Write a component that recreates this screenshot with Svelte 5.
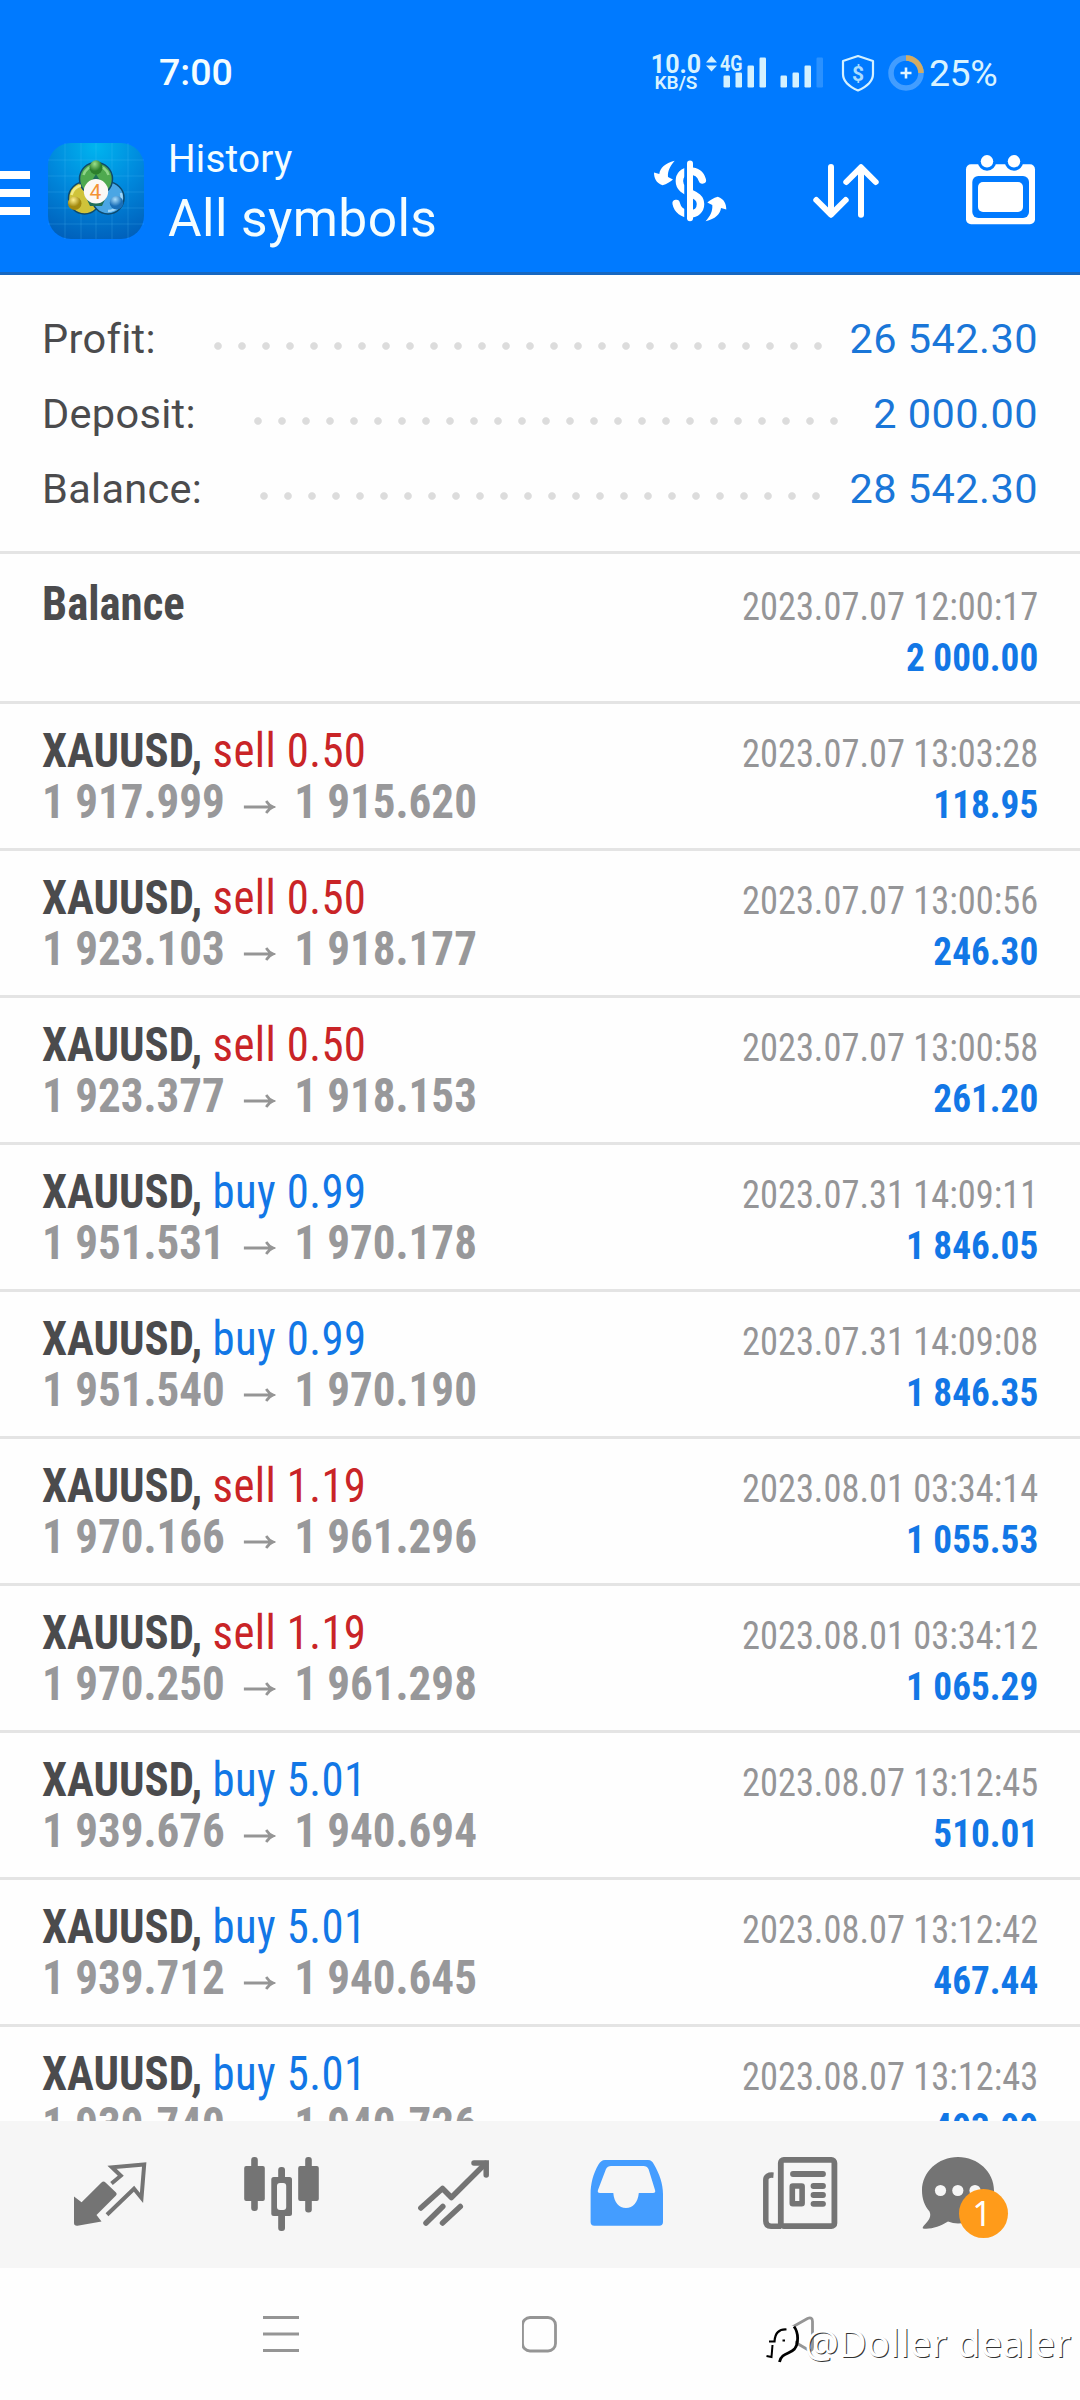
<script lang="ts">
  type Deal = {
    symbol: string;
    side?: "buy" | "sell";
    volume?: string;
    open?: string;
    close?: string;
    time: string;
    profit: string;
  };

  const summary = [
    { label: "Profit:", value: "26 542.30" },
    { label: "Deposit:", value: "2 000.00" },
    { label: "Balance:", value: "28 542.30" },
  ];

  const deals: Deal[] = [
    { symbol: "Balance", time: "2023.07.07 12:00:17", profit: "2 000.00" },
    { symbol: "XAUUSD", side: "sell", volume: "0.50", open: "1 917.999", close: "1 915.620", time: "2023.07.07 13:03:28", profit: "118.95" },
    { symbol: "XAUUSD", side: "sell", volume: "0.50", open: "1 923.103", close: "1 918.177", time: "2023.07.07 13:00:56", profit: "246.30" },
    { symbol: "XAUUSD", side: "sell", volume: "0.50", open: "1 923.377", close: "1 918.153", time: "2023.07.07 13:00:58", profit: "261.20" },
    { symbol: "XAUUSD", side: "buy", volume: "0.99", open: "1 951.531", close: "1 970.178", time: "2023.07.31 14:09:11", profit: "1 846.05" },
    { symbol: "XAUUSD", side: "buy", volume: "0.99", open: "1 951.540", close: "1 970.190", time: "2023.07.31 14:09:08", profit: "1 846.35" },
    { symbol: "XAUUSD", side: "sell", volume: "1.19", open: "1 970.166", close: "1 961.296", time: "2023.08.01 03:34:14", profit: "1 055.53" },
    { symbol: "XAUUSD", side: "sell", volume: "1.19", open: "1 970.250", close: "1 961.298", time: "2023.08.01 03:34:12", profit: "1 065.29" },
    { symbol: "XAUUSD", side: "buy", volume: "5.01", open: "1 939.676", close: "1 940.694", time: "2023.08.07 13:12:45", profit: "510.01" },
    { symbol: "XAUUSD", side: "buy", volume: "5.01", open: "1 939.712", close: "1 940.645", time: "2023.08.07 13:12:42", profit: "467.44" },
    { symbol: "XAUUSD", side: "buy", volume: "5.01", open: "1 939.740", close: "1 940.726", time: "2023.08.07 13:12:43", profit: "493.99" },
  ];

  const unread = 1;
</script>

<div class="screen">
  <header>
    <div class="status">
      <span class="clock">7:00</span>
      <div class="indicators">
        <div class="speed">
          <span class="rate">10.0</span>
          <span class="unit">KB/S</span>
        </div>
        <svg class="signal" width="120" height="36" viewBox="0 0 120 36" fill="#d4f1ff">
          <path d="M2 7.5L7.5 1L13 7.5ZM2 10.5H13L7.5 16.5Z" />
          <text x="16" y="16" font-size="22" font-weight="700" textLength="22.5" lengthAdjust="spacingAndGlyphs">4G</text>
          <rect x="19.5" y="20.5" width="6.5" height="12" rx="1.2" />
          <rect x="31.5" y="17.5" width="6.5" height="15" rx="1.2" />
          <rect x="43.5" y="10.5" width="6.5" height="22" rx="1.2" />
          <rect x="55.5" y="2.5" width="6.5" height="30" rx="1.2" />
          <rect x="76.5" y="20.5" width="6.5" height="12" rx="1.2" />
          <rect x="88.5" y="17.5" width="6.5" height="15" rx="1.2" />
          <rect x="100.5" y="10.5" width="6.5" height="22" rx="1.2" />
          <rect x="112.5" y="2.5" width="6.5" height="30" rx="1.2" opacity="0.2" />
        </svg>
        <svg class="shield" width="34" height="38" viewBox="0 0 34 38">
          <path d="M17 2L32 7V20C32 28 25 33 17 36.5C9 33 2 28 2 20V7Z" fill="none" stroke="#d4f1ff" stroke-width="2.2" stroke-linejoin="round" />
          <text x="17" y="26.5" font-size="21" font-weight="700" text-anchor="middle" fill="#a9dcff">$</text>
        </svg>
        <svg class="battery" width="36" height="36" viewBox="0 0 36 36" fill="none">
          <circle cx="18" cy="18" r="15" stroke="#429dff" stroke-width="5.5" />
          <path d="M18 3A15 15 0 0 1 33 18" stroke="#d3ab62" stroke-width="5.5" />
          <path d="M18 12.5V23.5M12.5 18H23.5" stroke="#e4f6ff" stroke-width="2.6" />
        </svg>
        <span class="percent">25%</span>
      </div>
    </div>

    <div class="appbar">
      <svg class="drawer" width="30" height="48" viewBox="0 0 30 48" fill="#fff">
        <path d="M0 2H30V10H0ZM0 20H30V28H0ZM0 38H30V46H0Z" />
      </svg>
      <svg class="logo" width="96" height="96" viewBox="0 0 96 96">
        <defs>
          <radialGradient id="sky" cx="50%" cy="4%" r="100%">
            <stop offset="0" stop-color="#00b4ef" />
            <stop offset="0.5" stop-color="#0088dc" />
            <stop offset="1" stop-color="#0060bb" />
          </radialGradient>
          <radialGradient id="leaf" cx="40%" cy="25%">
            <stop offset="0" stop-color="#9be08a" />
            <stop offset="1" stop-color="#2c7f2c" />
          </radialGradient>
          <radialGradient id="gold" cx="40%" cy="25%">
            <stop offset="0" stop-color="#fff08c" />
            <stop offset="1" stop-color="#a38a10" />
          </radialGradient>
          <radialGradient id="ocean" cx="40%" cy="25%">
            <stop offset="0" stop-color="#a9defc" />
            <stop offset="1" stop-color="#1a6fb8" />
          </radialGradient>
        </defs>
        <rect width="96" height="96" rx="23" fill="url(#sky)" />
        <path d="M17 0V96M33 0V96M48 0V96M64 0V96M80 0V96M0 17H96M0 33H96M0 49H96M0 65H96M0 81H96" stroke="#5cc8ff" stroke-opacity="0.2" />
        <!-- yellow and blue figures are filled so no sky shows between them and the disc -->
        <g stroke="#0d4a6e" stroke-width="1.5">
          <circle cx="36.5" cy="55" r="16" fill="#cfc33a" />
          <circle cx="60" cy="55" r="16" fill="#4aa6e4" />
          <circle cx="48" cy="36" r="16.5" fill="#4fa94f" />
        </g>
        <path d="M36 50L48 31L60 50L54 63H42Z" fill="#1f6f5a" />
        <g fill="none">
          <path d="M35.500 32A13 13 0 0 1 60.500 32" stroke="#8fd487" stroke-width="2.500" />
          <path d="M23.500 52A13 13 0 0 1 33 42.500" stroke="#f0ea84" stroke-width="2.500" />
          <path d="M73 50A14 14 0 0 1 60 68" stroke="#9fd6f8" stroke-width="2.500" />
        </g>
        <ellipse cx="48" cy="24.5" rx="6.5" ry="7.2" fill="url(#leaf)" />
        <circle cx="26.7" cy="60.3" r="6.8" fill="url(#gold)" />
        <circle cx="68.5" cy="59.8" r="6.8" fill="url(#ocean)" />
        <circle cx="48" cy="48.3" r="12.2" fill="#fbf8f5" />
        <text x="47.5" y="56" font-size="21" text-anchor="middle" fill="#f39335">4</text>
      </svg>
      <div class="titles">
        <span class="section">History</span>
        <span class="filter">All symbols</span>
      </div>
      <div class="actions">
        <svg width="80" height="72" viewBox="0 0 80 72">
          <path d="M52.3 25C50.5 19 46 16 40 16C33 16 29.4 20.5 29.4 26C29.4 33 35 35.5 40 37.8C46 40.5 50.5 43 50.5 49C50.5 55 46 59 40 59C33 59 27.5 55 26.2 48.5" fill="none" stroke="#fff" stroke-width="7.5" stroke-linecap="round" />
          <path d="M36 8V66" stroke="#007aff" stroke-width="3.5" />
          <path d="M40 8.5V63.2" stroke="#fff" stroke-width="6" stroke-linecap="round" />
          <path d="M24.7 5.7C15 8 10 13 9.3 19L4 17.5C4 23 6 28 12.5 30.3C17 29 20 27 23 24.5L18 22C17.5 16 20 11 24.7 5.7Z" fill="#fff" />
          <path d="M24.7 5.7C15 8 10 13 9.3 19L4 17.5C4 23 6 28 12.5 30.3C17 29 20 27 23 24.5L18 22C17.5 16 20 11 24.7 5.7Z" transform="translate(80.3 72) rotate(180)" fill="#fff" />
        </svg>
        <svg width="76" height="72" viewBox="0 0 76 72" fill="none" stroke="#fff" stroke-width="6" stroke-linecap="round" stroke-linejoin="round">
          <path d="M23 12V59.5M8.3 45L23 59.7L37.7 45" />
          <path d="M53 59.7V12.5M38.3 27L53 12.3L67.7 27" />
        </svg>
        <svg width="76" height="82" viewBox="0 0 76 82">
          <rect x="4" y="14.3" width="69" height="60" rx="5" fill="#fff" />
          <circle cx="25" cy="11.5" r="9.2" fill="#007aff" />
          <circle cx="52" cy="11.5" r="9.2" fill="#007aff" />
          <circle cx="25" cy="11.3" r="6.2" fill="#fff" />
          <circle cx="52" cy="11.3" r="6.2" fill="#fff" />
          <rect x="10.3" y="26" width="56.7" height="42" rx="6" fill="#007aff" />
          <rect x="16" y="32" width="45" height="30" rx="5" fill="#fff" />
        </svg>
      </div>
    </div>
  </header>

  <section class="summary">
    {#each summary as line}
      <div class="line">
        <span>{line.label}</span>
        <i class="leader"></i>
        <span class="amount">{line.value}</span>
      </div>
    {/each}
  </section>

  <main class="deals">
    {#each deals as deal}
      <div class="deal">
        <div class="left">
          <div class="symbol">
            {#if deal.side}
              <b>{deal.symbol},</b> <span class={deal.side}>{deal.side} {deal.volume}</span>
            {:else}
              <b>{deal.symbol}</b>
            {/if}
          </div>
          {#if deal.open}
            <div class="prices">
              <span>{deal.open}</span>
              <svg width="34" height="16" viewBox="0 0 34 16" fill="none" stroke="#959595" stroke-width="2.8">
                <path d="M0 8H31M24 2Q27 6.500 31.500 8Q27 9.500 24 14" />
              </svg>
              <span>{deal.close}</span>
            </div>
          {/if}
        </div>
        <div class="right">
          <div class="time">{deal.time}</div>
          <div class="profit">{deal.profit}</div>
        </div>
      </div>
    {/each}
  </main>

  <nav>
    <svg viewBox="0 0 96 97" fill="none">
      <path d="M12 50.5L19.6 56.3L39.5 36.5Q41.5 34.5 43.5 36.5L54 46.5Q55.5 48 54 49.5L34.5 69L39.5 75.5L15.5 79.7Q12 80 12 77Z" fill="#747474" />
      <path d="M49.5 37.5L58.8 29.7L50 21.3L82.2 18.5L79.5 52L72 42.8L45 68.8" stroke="#747474" stroke-width="4" />
    </svg>
    <svg viewBox="0 0 96 97" fill="#747474">
      <rect x="17.2" y="11" width="6.6" height="54" rx="3" />
      <rect x="10.2" y="20" width="20.6" height="35" rx="2" />
      <rect x="71.2" y="11" width="6.6" height="55.5" rx="3" />
      <rect x="64.2" y="20" width="20.6" height="35" rx="2" />
      <rect x="44.2" y="21" width="6.8" height="64" rx="3" />
      <rect x="37.3" y="31" width="20.7" height="39" rx="2.5" />
      <rect x="43" y="37" width="9.2" height="27" rx="3" fill="#f6f6f6" />
    </svg>
    <svg viewBox="0 0 96 97" fill="none" stroke="#747474" stroke-width="5.5">
      <path d="M14.8 62L36.5 42.5L45.4 51.5L79.5 17.5M20 77L36.8 60.5M36.5 77L54.3 60.5" stroke-linecap="round" stroke-linejoin="round" />
      <path d="M68 17H80.2V29" stroke-linecap="round" />
    </svg>
    <svg viewBox="0 0 96 97">
      <path d="M27 14H70C73 14 74.5 15.5 76 18.5C81.5 28 85 38 85 48V76Q85 79.7 81.3 79.7H16.3Q12.6 79.7 12.6 76V48C12.6 38 15 28 20.5 18.5C22.5 15.5 24 14 27 14ZM33 20Q29.5 20 28 23L20 44Q19 47 22 47H35.3C36 56 41 62 48 62C55 62 60 56 60.8 47H75Q78 47 77 44L70.5 23Q69 20 65.5 20Z" fill="#449dff" fill-rule="evenodd" />
    </svg>
    <svg viewBox="0 0 96 97" fill="none" stroke="#747474">
      <rect x="30.8" y="13.9" width="53.6" height="66.3" rx="3" stroke-width="5.8" />
      <path d="M23.5 29.2Q15.8 28.5 15.8 34V75Q15.8 80.2 21 80.2H31" stroke-width="5.5" />
      <path d="M43 28H73M63.5 40H73M63.5 49H73M63.5 57.8H73" stroke-width="5.8" stroke-linecap="round" />
      <rect x="42.3" y="40" width="9.8" height="17.8" rx="0.5" stroke-width="5.6" />
    </svg>
    <div class="chat">
      <svg viewBox="0 0 96 97">
        <path d="M36 11C56 11 72 26 72 44.5C72 63 56 77.5 36 77.5Q31 77.5 26 75.5C18 80.5 9 83.5 1 82.5Q0 82 1.5 80C7.5 74 9.5 70 7.5 65.5C2.5 59.5 0 53 0 44.5C0 26 16 11 36 11Z" fill="#747474" />
        <circle cx="18.5" cy="44.5" r="5.6" fill="#f6f6f6" />
        <circle cx="35.8" cy="44.5" r="5.6" fill="#f6f6f6" />
        <circle cx="53" cy="44.5" r="5.6" fill="#f6f6f6" />
      </svg>
      <span class="badge">{unread}</span>
    </div>
  </nav>

  <footer>
    <svg width="36" height="38" viewBox="0 0 36 38">
      <path d="M0 2.5H36M0 19H36M0 35.5H36" stroke="#959595" stroke-width="3" />
    </svg>
    <svg width="36" height="38" viewBox="0 0 36 38">
      <rect x="0.500" y="2.5" width="33" height="33.5" rx="7.5" fill="none" stroke="#959595" stroke-width="2.8" />
    </svg>
    <svg width="36" height="38" viewBox="0 0 36 38">
      <path d="M7 14.5L26.5 3.5Q31.5 1.5 31.5 6.5V32Q31.5 37 26.5 34.5L7 23Q1 19 7 14.5Z" fill="none" stroke="#959595" stroke-width="2.8" />
    </svg>
  </footer>

  <div class="watermark">
    <svg width="40" height="44" viewBox="0 0 40 44">
      <path d="M10 10Q20 4 31 6V32L18 42H2V20Z" fill="#fefefe" />
      <path d="M5 21.5H10.5C11 13 15 9 22.5 9.5" fill="none" stroke="#000" stroke-width="2.2" />
      <path d="M30 6.5C35 13 34.5 24 30.5 29C26 34 17 33 15.500 42" fill="none" stroke="#000" stroke-width="2.8" />
      <path d="M8.5 25L7.5 37L2.5 36M18.5 20.5H21" fill="none" stroke="#000" stroke-width="2" />
    </svg>
    <span>@Doller dealer</span>
  </div>
</div>

<style>
  :global(body) {
    background: #fefefe;
  }
  .screen {
    position: relative;
    display: flex;
    flex-direction: column;
    width: 1080px;
    height: 2400px;
    overflow: hidden;
    background: #fefefe;
    font-family: Roboto, "Liberation Sans", sans-serif;
    color: #4b4b4d;
  }
  svg {
    display: block;
    flex: none;
  }

  header {
    box-sizing: border-box;
    height: 275px;
    background: #007aff;
    border-bottom: 3px solid #1767c0;
    color: #f4fdff;
  }
  .status {
    display: flex;
    align-items: center;
    justify-content: space-between;
    height: 59px;
    padding: 43px 83px 1px 159px;
    font-size: 37.5px;
  }
  .clock {
    font-weight: 500;
    line-height: 56px;
    padding-bottom: 1px;
  }
  .indicators {
    display: flex;
    align-items: center;
    color: #d9f3ff;
  }
  .speed {
    display: flex;
    flex-direction: column;
    align-items: center;
    width: 50px;
    font-weight: 700;
  }
  .rate {
    font-size: 25px;
    line-height: 19px;
  }
  .unit {
    font-size: 19px;
    line-height: 17px;
    font-weight: 600;
  }
  .signal {
    margin-left: 3px;
  }
  .shield {
    margin-left: 17px;
  }
  .battery {
    margin-left: 13px;
  }
  .percent {
    width: 68px;
    margin-left: 5px;
    letter-spacing: -0.5px;
  }

  .appbar {
    display: flex;
    align-items: center;
    height: 162px;
    padding: 7px 42px 0 0;
  }
  .drawer {
    margin-top: 4px;
  }
  .logo {
    margin-left: 18px;
  }
  .titles {
    display: flex;
    flex-direction: column;
    margin: 16px 0 0 24px;
  }
  .section {
    font-size: 38.7px;
    line-height: 40px;
    letter-spacing: 0.2px;
  }
  .filter {
    font-size: 51.5px;
    line-height: 80px;
    letter-spacing: 0.4px;
  }
  .actions {
    display: flex;
    align-items: center;
    gap: 78px;
    margin-left: auto;
  }

  .summary {
    padding: 26px 42px 25px;
    border-bottom: 3px solid #e4e4e4;
  }
  .line {
    display: flex;
    align-items: center;
    height: 75px;
    font-size: 41.5px;
    letter-spacing: 0.3px;
  }
  .leader {
    flex: 1;
    height: 8px;
    margin: 15px 25px 0 58px;
    background: radial-gradient(circle at 4px 4px, #dcdcdc 3.3px, transparent 4.3px) 0 0 / 24px 8px;
  }
  .amount {
    color: #1a76d8;
    letter-spacing: 0.45px;
  }

  .deals {
    height: 1564px;
    padding-top: 3px;
    overflow: hidden;
    font-family: "Roboto Condensed", Roboto, sans-serif;
  }
  .deal {
    display: flex;
    justify-content: space-between;
    height: 144px;
    padding: 0 42px;
    border-bottom: 3px solid #e4e4e4;
  }
  .left {
    padding-top: 21px;
    font-size: 48px;
    line-height: 51px;
  }
  /* the list uses a slightly narrower cut than Roboto Condensed */
  .symbol {
    transform: scaleX(0.933);
    transform-origin: left;
  }
  .buy,
  .sell {
    letter-spacing: 0.4px;
  }
  .buy {
    color: #1277e6;
  }
  .sell {
    color: #c92427;
  }
  .prices {
    display: flex;
    align-items: center;
    font-weight: 700;
    color: #98989a;
    transform: scaleX(0.938);
    transform-origin: left;
  }
  .prices svg {
    margin: 10px 20px 0;
  }
  .right {
    padding-top: 25px;
    font-size: 39px;
    line-height: 51px;
    text-align: right;
  }
  .time {
    color: #959597;
    transform: scaleX(0.934);
    transform-origin: right;
  }
  .profit {
    font-weight: 700;
    color: #1277e6;
    transform: scaleX(0.955);
    transform-origin: right;
  }

  nav {
    display: grid;
    grid-template-columns: repeat(6, 172px);
    align-items: center;
    justify-content: center;
    justify-items: center;
    height: 147px;
    background: #f6f6f6;
  }
  nav svg {
    width: 96px;
    height: 97px;
  }
  .chat {
    position: relative;
  }
  .badge {
    position: absolute;
    left: 37px;
    top: 43px;
    width: 49px;
    height: 49px;
    border-radius: 50%;
    background: #ff9b1a;
    color: #fff;
    font-family: "Noto Sans", sans-serif;
    font-size: 34px;
    line-height: 49px;
    text-align: center;
    text-indent: -3px;
  }

  footer {
    display: flex;
    justify-content: space-between;
    padding: 47px 263px 0;
  }

  .watermark {
    position: absolute;
    right: 9px;
    bottom: 32px;
    display: flex;
    align-items: center;
    font-family: "Noto Sans", sans-serif;
    font-size: 38.3px;
    line-height: 52px;
    color: #fff;
    text-shadow: 1px 0.5px 0 #333;
  }
</style>
